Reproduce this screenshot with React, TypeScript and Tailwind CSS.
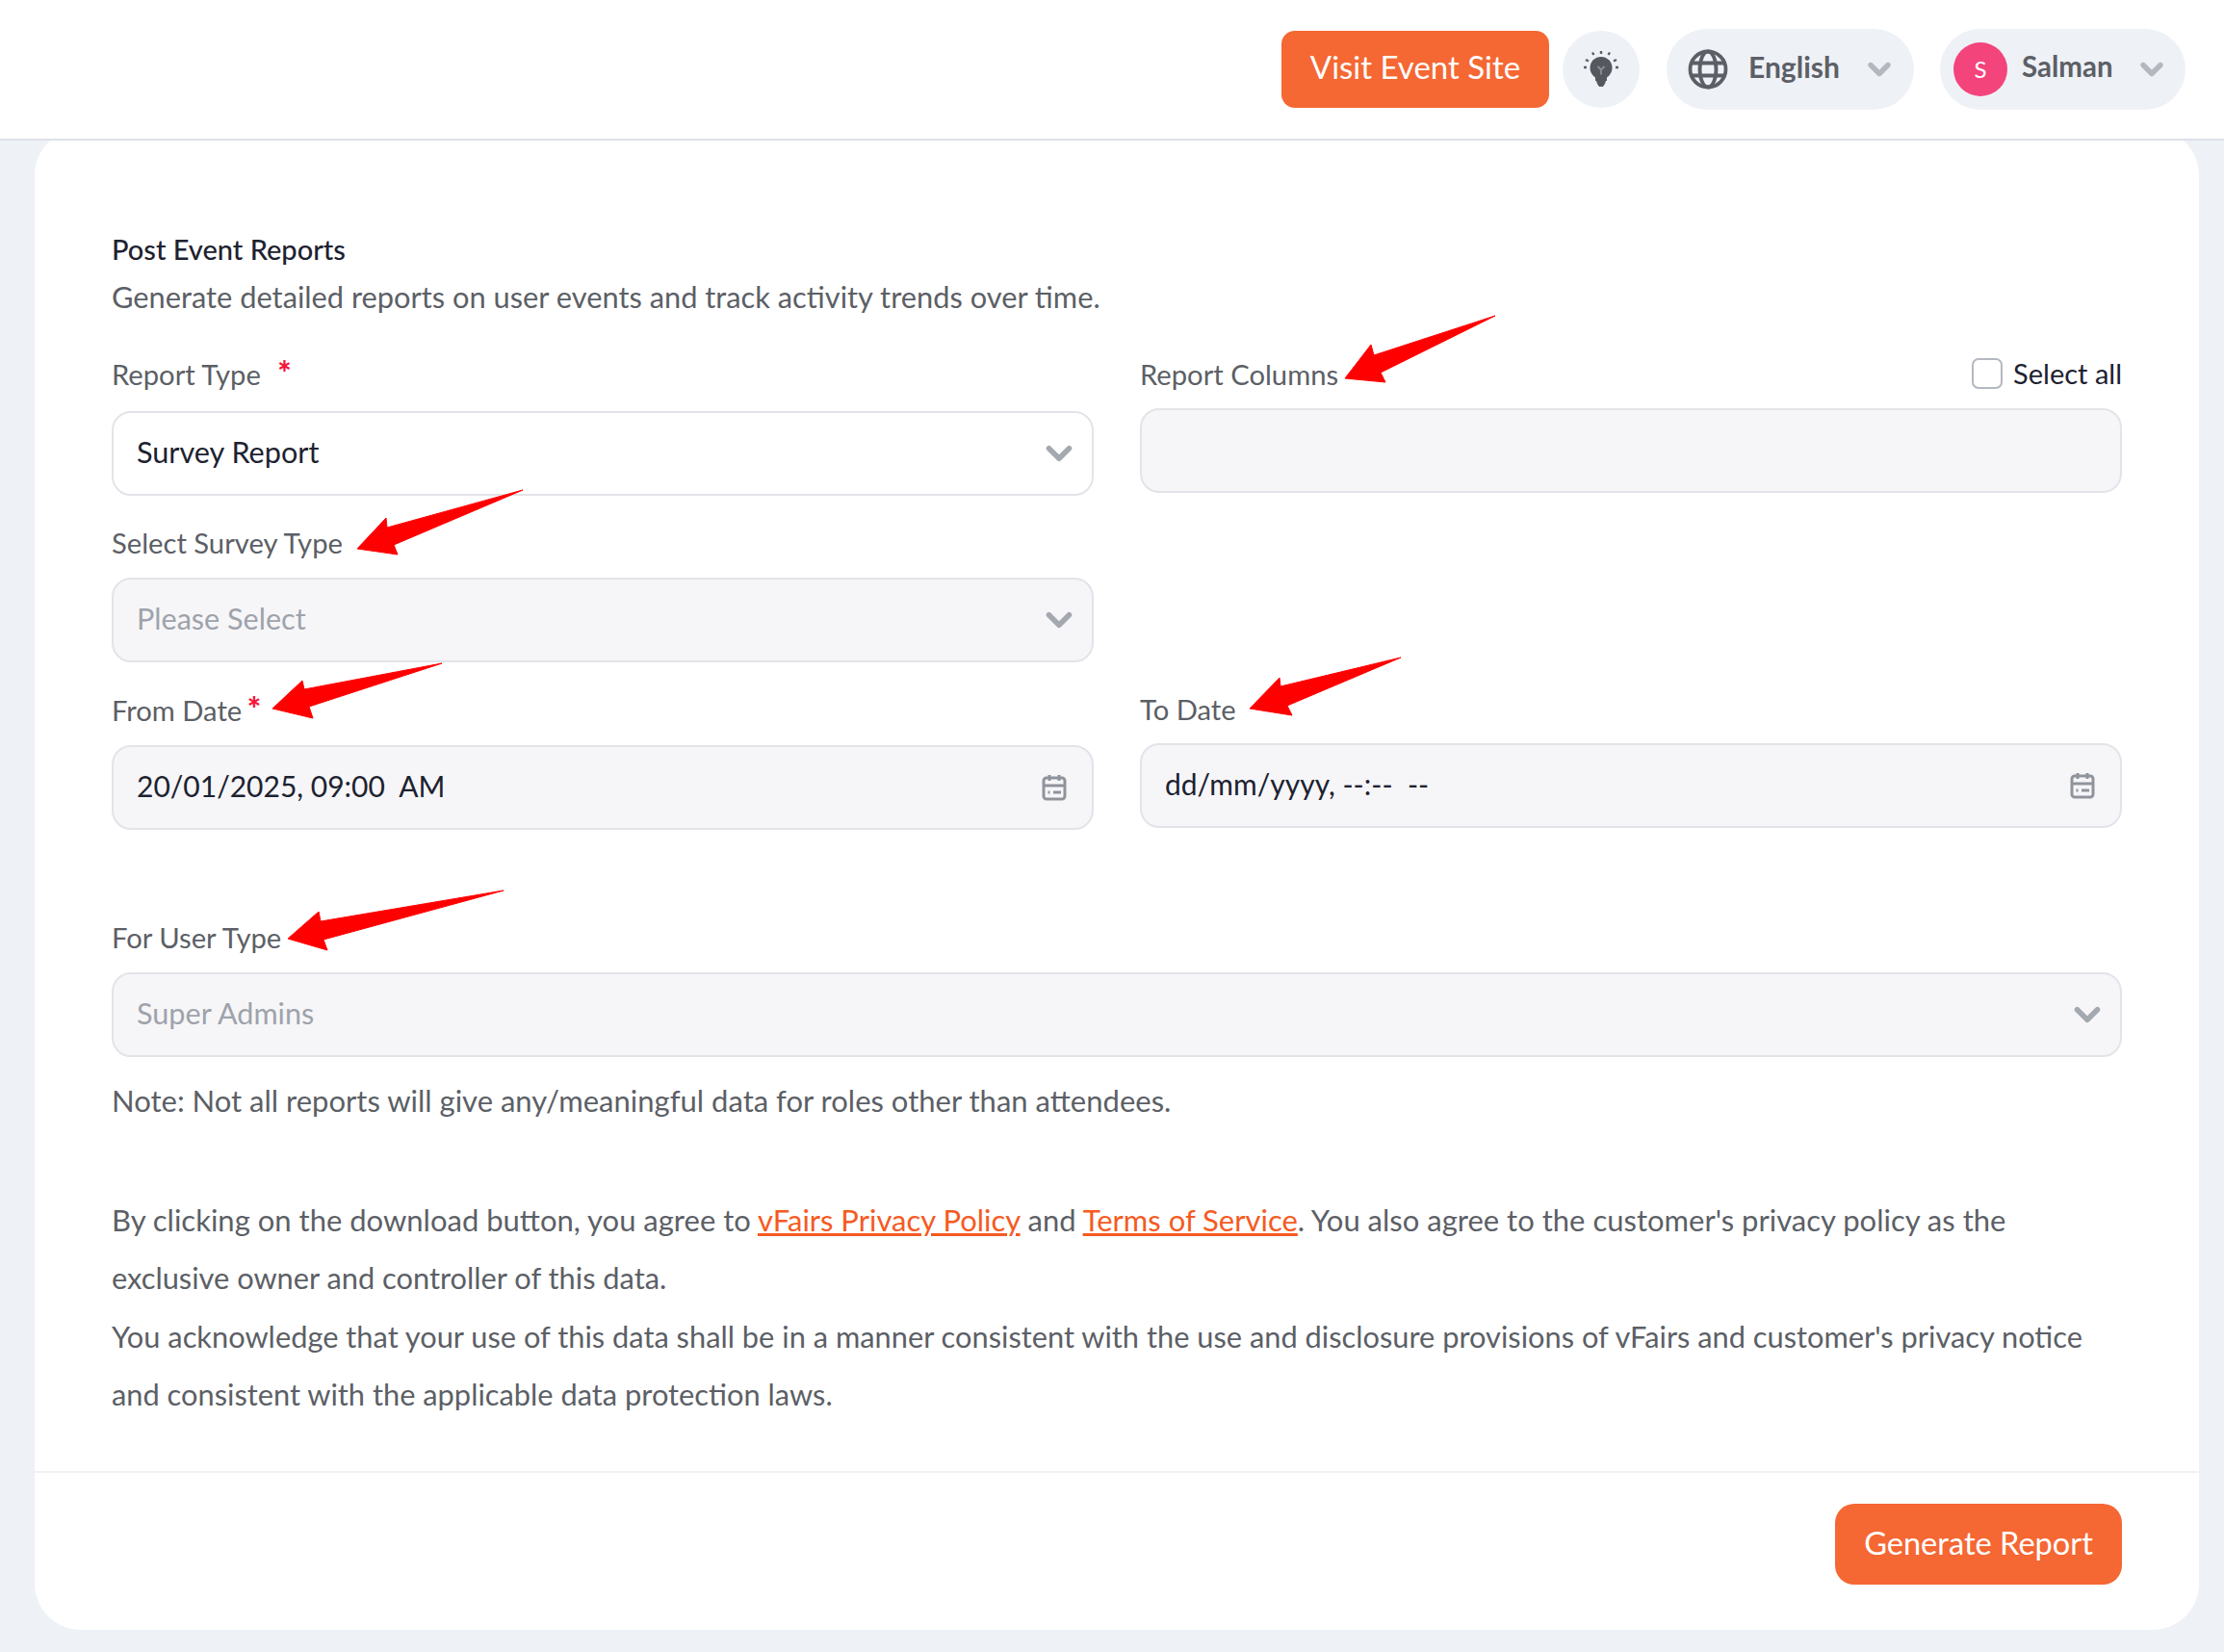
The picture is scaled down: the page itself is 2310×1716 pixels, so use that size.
import { ChevronDown } from "lucide-react";

const font = "font-['Lato','Noto_Sans',sans-serif]";

function Req({ className = "" }: { className?: string }) {
  return <span className={`text-[#f5163b] font-black text-[34px] leading-[0] ${className}`}>*</span>;
}

function Label({ children, className = "" }: { children: React.ReactNode; className?: string }) {
  return <div className={`text-[29.2px] leading-[38px] pb-[2px] text-[#5c5f66] ${className}`}>{children}</div>;
}

function Field({ children, muted, icon, className = "" }: { children?: React.ReactNode; muted?: boolean; icon?: React.ReactNode; className?: string }) {
  return (
    <div className={`flex items-center justify-between h-[88px] pl-[24px] pr-[13px] rounded-[20px] border-2 border-[#e2e4e9] text-[30.6px] ${muted ? "bg-[#f6f6f8]" : "bg-white"} ${className}`}>
      <span className="pb-[3px]">{children}</span>
      {icon}
    </div>
  );
}

const chevron = <ChevronDown size={42} strokeWidth={3.2} className="text-[#a4a8af]" />;

function Calendar() {
  return (
    <svg width="26" height="28" viewBox="0 0 26 28" fill="none" stroke="#8f939b" strokeWidth="3" className="mr-[13px]">
      <rect x="2" y="4" width="22" height="22" rx="3" />
      <path d="M2 12h22M8 1v6M18 1v6M6.5 19h2M12 19h8" />
    </svg>
  );
}

function Arrow({ points }: { points: string }) {
  return <polygon points={points} fill="#ff0000" stroke="#ff0000" strokeWidth="1" strokeLinejoin="round" />;
}

export default function App() {
  return (
    <div className={`relative h-[1716px] bg-[#eef1f6] text-[#1d2230] ${font}`}>
      <header className="relative z-10 h-[146px] bg-white border-b-2 border-[#dde1e8] flex items-center justify-end pr-[40px] pb-[1px]">
        <button className="w-[278px] h-[80px] rounded-[14px] bg-[#f56733] text-white text-[33px] pb-[3px]">Visit Event Site</button>
        <div className="ml-[14px] w-[80px] h-[80px] rounded-full bg-[#eef1f6] flex items-center justify-center">
          <svg width="36" height="38" viewBox="0 0 36 38" fill="#55585f">
            <circle cx="18" cy="17.5" r="11.5" />
            <path d="M12 26h12v5h-1l-1 3-2 3h-4l-2-3-1-3h-1z" />
            <path d="M14.5 16l3.5 3.5 3.500-3.500M18 19.500v5" stroke="#8b8e95" strokeWidth="1.800" fill="none" />
            <path d="M18 0v3M9 1.500l1.500 2.500M27 1.500l-1.500 2.500M2 9l3 1.500M34 9l-3 1.500M0 17h3M33 17h3" stroke="#5c5f66" strokeWidth="2.400" />
          </svg>
        </div>
        <div className="ml-[28px] w-[257px] h-[84px] rounded-full bg-[#eef1f6] flex items-center pl-[22px] pr-[18px]">
          <svg width="42" height="42" viewBox="0 0 42 42" fill="none" stroke="#5c5f66" strokeWidth="3.800">
            <circle cx="21" cy="21" r="18.5" />
            <ellipse cx="21" cy="21" rx="8.500" ry="18.5" />
            <path d="M4 14.500h34M4 27.500h34" />
          </svg>
          <span className="ml-[21px] pb-[4px] text-[30px] font-bold text-[#5c5f66] flex-1">English</span>
          <ChevronDown size={36} strokeWidth={3.6} className="text-[#b4b7bd]" />
        </div>
        <div className="ml-[27px] w-[255px] h-[84px] rounded-full bg-[#eef1f6] flex items-center pl-[14px] pr-[17px]">
          <div className="w-[56px] h-[56px] rounded-full bg-[#f4447c] text-white text-[24px] flex items-center justify-center">S</div>
          <span className="ml-[15px] pb-[4px] text-[29.5px] font-bold text-[#5c5f66] flex-1">Salman</span>
          <ChevronDown size={36} strokeWidth={3.6} className="text-[#b4b7bd]" />
        </div>
      </header>

      <main className="-mt-[12px] mx-[36px] w-[2248px] h-[1559px] bg-white rounded-[48px] flex flex-col">
        <div className="flex-1 px-[80px] pt-[105px]">
          <h1 className="text-[29px] leading-[40px] font-medium text-[#1d2230]">Post Event Reports</h1>
          <p className="mt-[10px] text-[30.8px] leading-[40px] text-[#5c5f66]">Generate detailed reports on user events and track activity trends over time.</p>

          <div className="mt-[41px] grid grid-cols-2 gap-x-[48px]">
            <div>
              <Label>
                Report Type <Req className="ml-[10px]" />
              </Label>
              <Field icon={chevron} className="mt-[17px]">Survey Report</Field>
              <Label className="mt-[30px]">Select Survey Type</Label>
              <Field muted icon={chevron} className="mt-[15px] text-[#9ea3ab]">Please Select</Field>
              <Label className="mt-[31px]">
                From Date <Req className="-ml-[2px]" />
              </Label>
              <Field muted icon={<Calendar />} className="mt-[15px]">
                <span className="text-[30px]">20/01/2025, 09:00&nbsp; AM</span>
              </Field>
            </div>
            <div>
              <div className="flex items-center justify-between">
                <Label>Report Columns</Label>
                <label className="flex items-center gap-[11px] text-[29px] leading-[38px] -mt-[4px]">
                  <span className="w-[32px] h-[32px] rounded-[7px] border-2 border-[#b4b8c0] bg-white" />
                  Select all
                </label>
              </div>
              <Field muted className="mt-[14px]" />
              <Label className="mt-[206px]">To Date</Label>
              <Field muted icon={<Calendar />} className="mt-[14px]">
                <span className="text-[30px]">dd/mm/yyyy, --:-- &nbsp;--</span>
              </Field>
            </div>
          </div>

          <Label className="mt-[93px]">For User Type</Label>
          <Field muted icon={chevron} className="mt-[15px] text-[#9ea3ab]">Super Admins</Field>
          <p className="mt-[25px] text-[31px] leading-[40px] text-[#5c5f66]">Note: Not all reports will give any/meaningful data for roles other than attendees.</p>

          <p className="mt-[74px] text-[30.8px] leading-[60.4px] text-[#5c5f66]">
            <span className="text-[31px]">
              By clicking on the download button, you agree to{" "}
              <a className="text-[#f55a22] underline">vFairs Privacy Policy</a> and{" "}
              <a className="text-[#f55a22] underline">Terms of Service</a>. You also agree to the customer's privacy policy as the
            </span>
            <br />
            exclusive owner and controller of this data.
            <br />
            You acknowledge that your use of this data shall be in a manner consistent with the use and disclosure provisions of vFairs and customer's privacy notice
            <br />
            and consistent with the applicable data protection laws.
          </p>
        </div>
        <footer className="h-[165px] border-t-2 border-[#eef2f7] flex justify-end items-start pt-[32px] pr-[80px]">
          <button className="w-[298px] h-[84px] rounded-[20px] bg-[#f56733] text-white text-[32.6px] pb-[2px]">Generate Report</button>
        </footer>
      </main>

      {/* the red annotations drawn on top of the screenshot */}
      <svg className="absolute inset-0 z-20 pointer-events-none" width="2310" height="1716">
        <Arrow points="1553,328 1427,369 1424,358 1397,393 1439,397 1434,387" />
        <Arrow points="543,509 402,548 401,538 371,570 413,576 409,566" />
        <Arrow points="459,689 316,716 314,707 283,736 325,746 321,734" />
        <Arrow points="1455,683 1330,713 1329,704 1298,736 1342,743 1337,733" />
        <Arrow points="523,925 333,957 331,947 299,975 340,987 336,976" />
      </svg>
    </div>
  );
}
